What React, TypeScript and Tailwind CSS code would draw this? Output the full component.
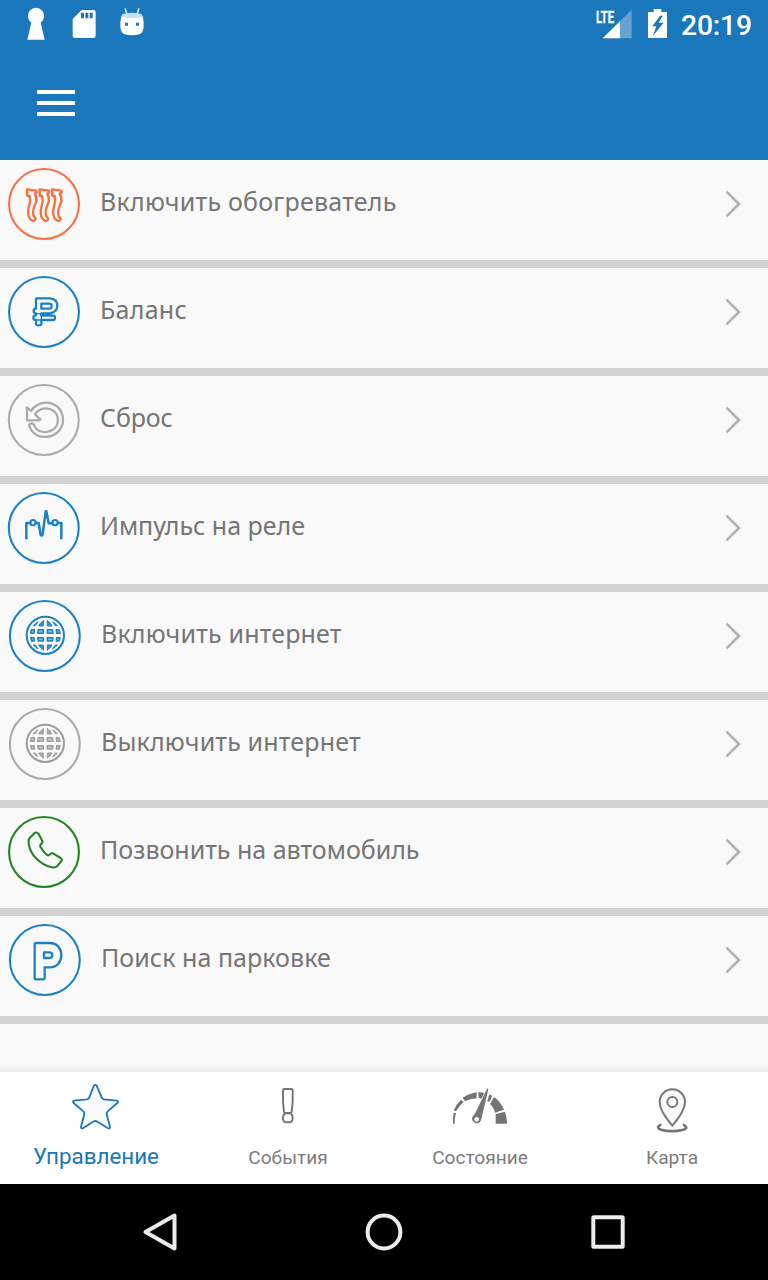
import type { ReactNode } from "react";

const BLUE = "#1a80c8";
const GREY = "#aaaaaa";

function RoundIcon({ color, cx = 132, children }: { color: string; cx?: number; children: ReactNode }) {
  return (
    <svg
      className="h-[88px] w-[88px] shrink-0"
      viewBox="0 0 264 264"
      fill="none"
      stroke={color}
      strokeWidth="6.2"
      strokeLinejoin="round"
      strokeLinecap="round"
    >
      <circle cx={cx} cy="132" r="104.8" />
      {children}
    </svg>
  );
}

const wave =
  "M82 88 L110 92 L111 97 L105 101 Q112 110 110 124 L104 140 Q98 157 102 168 L108 176 Q107 182 100 183 Q88 178 86 164 Q84 150 88 140 Q94 124 90 108 L83 108 Z";

function Heater() {
  return (
    <RoundIcon color="#f96f3f">
      <g strokeWidth="7" transform="translate(-1 0)">
        <path d={wave} />
        <path d={wave} transform="translate(37.5 0)" />
        <path d={wave} transform="translate(75 0)" />
      </g>
    </RoundIcon>
  );
}

function Ruble() {
  return (
    <RoundIcon color={BLUE}>
      <g transform="translate(-1 0)">
        <g strokeWidth="6.8">
          <path d="M111 91 H152 Q173 94 173 112 Q173 132 152 136 H125 V143 H160 Q166 143 166 149 Q166 156 160 156 H125 V168 Q125 172 117 172 Q109 172 109 168 V156 Q101 156 101 149 Q101 142 109 142 V136 Q102 136 102 129 Q102 122 109 122 V94 Q109 91 111 91 Z" />
          <path d="M125 107 H149 Q156 107 156 114 Q156 122 149 122 H125 Z" />
        </g>
        <path d="M109 137 H125 M109 156 H125 M125 137 V156" strokeWidth="4" />
      </g>
    </RoundIcon>
  );
}

function Reset() {
  return (
    <RoundIcon color={GREY} cx={131.3}>
      <path
        strokeWidth="6.8"
        d="M81 94 L93 105 C108 83 138 73 163 86 C190 100 197 137 179 162 C159 188 117 189 99 168 Q91 160 88 150 Q86 143 94 142 Q101 142 103 149 C112 169 137 173 156 163 C178 151 179 120 161 105 C143 91 117 96 105 115 L121 130 Q119 133 114 133 H81 Z"
      />
    </RoundIcon>
  );
}

function Impulse() {
  return (
    <RoundIcon color={BLUE} cx={131.3}>
      <path
        d="M79 162 V117 H90 M107 117 H116 L122 153 Q125 157 128 151 L137 82 H139 L146 118 H157 M174 117 H184 V162"
        strokeWidth="7.5"
        strokeLinecap="square"
      />
      <circle cx="99" cy="116" r="8" />
      <circle cx="165" cy="116" r="8" />
    </RoundIcon>
  );
}

function Globe({ color, inner }: { color: string; inner: string }) {
  return (
    <RoundIcon color={color} cx={134.5}>
      <g stroke={inner}>
        <circle cx="136" cy="130" r="56" />
        <g strokeWidth="4.5" fill={inner} fillOpacity="0.5">
          <path d="M93 116 Q94 114 95 113 H103 L102 124 H92 Z M115 113 H130 V124 H113 Z M142 113 H157 L159 124 H142 Z M169 113 H177 L180 124 H170 Z" />
          <path d="M92 137 H102 L103 147 H95 Z M113 137 H130 V147 H115 Z M142 137 H159 L157 147 H142 Z M170 137 H180 L177 147 H169 Z" />
        </g>
        <g strokeWidth="3" fill={inner} fillOpacity="0.85">
          <path d="M130 86 V102 H116 Q120 92 130 86 Z M142 86 V102 H156 Q152 92 142 86 Z M130 174 V159 H116 Q120 168 130 174 Z M142 174 V159 H156 Q152 168 142 174 Z" />
          <path d="M113 90 Q105 94 100 101 H105 Z M159 90 Q167 94 172 101 H167 Z M113 170 Q105 166 100 159 H105 Z M159 170 Q167 166 172 159 H167 Z" />
        </g>
      </g>
    </RoundIcon>
  );
}

function Phone() {
  return (
    <RoundIcon color="#22841e">
      <path d="M105 74 Q111 72 116 78 L127 99 Q129 104 124 107 Q119 111 121 116 Q129 130 141 141 Q147 144 151 138 Q154 135 159 136 L182 150 Q188 154 184 159 L171 175 Q166 180 155 178 C120 170 90 140 86 106 Q84 96 89 90 Z" />
    </RoundIcon>
  );
}

function Parking() {
  return (
    <RoundIcon color={BLUE} cx={134.5}>
      <g strokeWidth="6.8">
        <path d="M109 81 H149 C172 81 184 98 184 117 C184 138 171 154 150 154 H134 V184 Q134 190 130 190 H109 Q104 190 104 186 V86 Q104 81 109 81 Z" />
        <path d="M132 109 H148 Q157 109 157 117 Q157 126 148 126 H132 Z" />
      </g>
    </RoundIcon>
  );
}

const rows: { label: string; icon: ReactNode; text: string }[] = [
  { label: "Включить обогреватель", icon: <Heater />, text: "pl-3 tracking-[0.23px]" },
  { label: "Баланс", icon: <Ruble />, text: "pl-3 tracking-[0.25px]" },
  { label: "Сброс", icon: <Reset />, text: "pl-3 tracking-[-0.1px]" },
  { label: "Импульс на реле", icon: <Impulse />, text: "pl-3 tracking-[0px]" },
  { label: "Включить интернет", icon: <Globe color={BLUE} inner="#1a80c8" />, text: "pl-[13px] tracking-[0.17px]" },
  { label: "Выключить интернет", icon: <Globe color={GREY} inner="#9c9c9c" />, text: "pl-[13px] tracking-[0.17px]" },
  { label: "Позвонить на автомобиль", icon: <Phone />, text: "pl-3 tracking-[0px]" },
  { label: "Поиск на парковке", icon: <Parking />, text: "pl-[13px] tracking-[0.04px]" },
];

function StatusBar() {
  return (
    <div className="flex h-12 items-center justify-between">
      <svg className="h-12 w-[160px]" viewBox="0 0 480 144" fill="#fff">
        <path d="M82 119 L94 68 A24.5 24.5 0 1 1 122 68 L134 119 Z" />
        <path
          fillRule="evenodd"
          d="M245 30 H280 Q287 30 287 37 V107 Q287 114 280 114 H225 Q218 114 218 107 V57 Z M243 38 V55 H252 V38 Z M256 38 V55 H265 V38 Z M269 38 V55 H278 V38 Z"
        />
        <path d="M364 48 Q396 58 428 48 Q432 63 431 80 Q430 96 420 102 Q396 110 372 102 Q362 96 361 80 Q360 63 364 48 Z" />
        <ellipse cx="396" cy="46" rx="31" ry="8" fill="#c6dff0" />
        <path d="M376 27 L380 40 M416 27 L412 40" stroke="#fff" strokeWidth="4" strokeLinecap="round" />
        <path d="M375 68 h9 v9 h-9 Z M408 68 h9 v9 h-9 Z" fill="#1b77bb" />
      </svg>
      <div className="flex h-12 items-center">
        <svg className="h-12 w-[88px]" viewBox="0 0 264 144" fill="#fff">
          <path d="M155 29 V115 H68 Z" opacity="0.32" />
          <path d="M120 64 V115 H68 Z" />
          <path d="M46 26 H106 V66 L100 70 H46 Z" fill="#1b77bb" />
          <text
            x="48"
            y="68"
            fontFamily="Roboto, sans-serif"
            fontWeight="700"
            fontSize="51"
            textLength="54"
            lengthAdjust="spacingAndGlyphs"
            stroke="#fff"
            strokeWidth="1"
          >
            LTE
          </text>
          <path
            fillRule="evenodd"
            d="M221 27 H244 V36 H261 V114 H204 V36 H221 Z M240 47 L217 79 H229 L219 107 L251 68 H236 L248 47 Z"
          />
        </svg>
        <span className="w-[100px] pt-[3px] pl-[13px] font-['Roboto'] text-[28.3px] leading-[45px] font-medium tracking-[-0.2px] text-white">
          20:19
        </span>
      </div>
    </div>
  );
}

const tabs: { label: string; icon: ReactNode; active?: boolean }[] = [
  {
    label: "Управление",
    active: true,
    icon: (
      <path
        d="M282 77 Q286 72 290 77 L305 112 Q307 117 312 118 L350 122 Q357 123 352 129 L323 154 Q319 158 320 163 L330 200 Q330 208 323 204 L290 184 Q286 182 282 184 L250 204 Q243 208 243 200 L253 163 Q254 158 250 154 L221 129 Q216 123 223 122 L261 118 Q266 117 268 112 Z"
        fill="#f9fbfd"
        stroke="#1b77bb"
        strokeWidth="5.5"
        strokeLinejoin="round"
      />
    ),
  },
  {
    label: "События",
    icon: (
      <g fill="none" stroke="#757575" strokeWidth="5.8" strokeLinejoin="round" transform="translate(-576 0)">
        <path d="M849 91 Q849 87 853 87 H873 Q878 87 878 91 V126 L875 156 Q874 159 863 159 Q853 159 852 156 L849 126 Z" />
        <path d="M855 160 H872 Q878 164 878 174 Q878 187 868 187 H859 Q849 187 849 174 Q849 164 855 160 Z" />
      </g>
    ),
  },
  {
    label: "Состояние",
    icon: (
      <g fill="#757575">
        <path d="M207 191 Q206 174 209 158 L216 159 Q211 174 212 191 Z" />
        <path d="M209 152 Q216 133 231 119 L239 126 Q223 139 217 153 Z" />
        <path d="M236 114 Q255 100 278 97 V115 Q258 116 243 124 Z" />
        <path d="M283 97 Q292 96 300 99 L293 116 Q288 113 284 114 Z" />
        <path d="M316 103 L325 107 L316 126 L310 123 Z" />
        <path d="M330 111 Q350 125 360 149 L333 158 Q328 140 318 132 Z" />
        <path d="M335 162 L363 155 Q369 171 369 191 H335 Z" />
        <path
          fillRule="evenodd"
          d="M310 85 L313 87 L292 178 Q289 190 277 190 Q264 187 264 175 Q265 168 272 163 Z M278 171 A7 7 0 1 0 278.1 171 Z"
        />
      </g>
    ),
  },
  {
    label: "Карта",
    icon: (
      <g fill="none" stroke="#757575" strokeWidth="5.8" strokeLinecap="round" transform="translate(-576 0)">
        <path
          d="M865 197 Q827 153 827 126 A38 38 0 0 1 903 126 Q903 153 865 197 Z"
          fill="#f9f9f9"
          strokeLinejoin="round"
        />
        <circle cx="865" cy="126" r="15" fill="#fff" />
        <path d="M829 195 C819 201 820 205 831 209 Q864 218 898 209 C910 205 909 201 900 195" strokeWidth="8" />
      </g>
    ),
  },
];

export default function App() {
  return (
    <div className="flex h-[1280px] w-[768px] flex-col overflow-hidden bg-[#f9f9f9]">
      <header className="h-40 shrink-0 bg-[#1b77bb]">
        <StatusBar />
        <div className="flex h-[110px] items-center pl-[37px]">
          <div className="flex w-[38px] flex-col gap-[7px]">
            <div className="h-1 bg-white" />
            <div className="h-1 bg-white" />
            <div className="h-1 bg-white" />
          </div>
        </div>
      </header>

      <main className="flex-1">
        {rows.map((row) => (
          <div key={row.label} className="flex h-[108px] items-start border-b-8 border-[#d2d2d2]">
            {row.icon}
            <span
              className={`flex-1 pt-[23px] font-['Noto_Sans','Open_Sans',sans-serif] text-[25px] leading-9 whitespace-nowrap text-[#757575] ${row.text}`}
            >
              {row.label}
            </span>
            <svg className="mt-7 mr-6 h-8 w-5" viewBox="0 0 20 32" fill="none" stroke="#b1b1b1" strokeWidth="2.7">
              <path d="M2.5 3.6 L15 16 L2.5 28.4" />
            </svg>
          </div>
        ))}
      </main>

      <div className="h-2 shrink-0 bg-linear-to-b from-[#f9f9f9] to-[#ececec]" />
      <nav className="grid h-28 shrink-0 grid-cols-4 bg-white font-['Roboto']">
        {tabs.map((tab) => (
          <div key={tab.label} className="flex flex-col items-center">
            <svg className="h-[68px] w-[192px]" viewBox="0 36 576 204">
              {tab.icon}
            </svg>
            <span
              className={
                tab.active
                  ? "text-[22.4px] leading-8 text-[#1b77bb]"
                  : "pt-[2px] text-[19.1px] leading-8 text-[#7c7c7c]"
              }
            >
              {tab.label}
            </span>
          </div>
        ))}
      </nav>

      <footer className="h-24 shrink-0 bg-black">
        <svg className="h-24 w-[768px]" viewBox="0 1184 768 96" fill="none" stroke="#ececec" strokeWidth="4">
          <path d="M174.5 1215.5 V1248.5 L145.5 1232 Z" strokeLinejoin="round" />
          <circle cx="384" cy="1232" r="16.4" />
          <rect x="593.3" y="1217.3" width="29.4" height="29.4" rx="0.5" strokeLinejoin="round" />
        </svg>
      </footer>
    </div>
  );
}
